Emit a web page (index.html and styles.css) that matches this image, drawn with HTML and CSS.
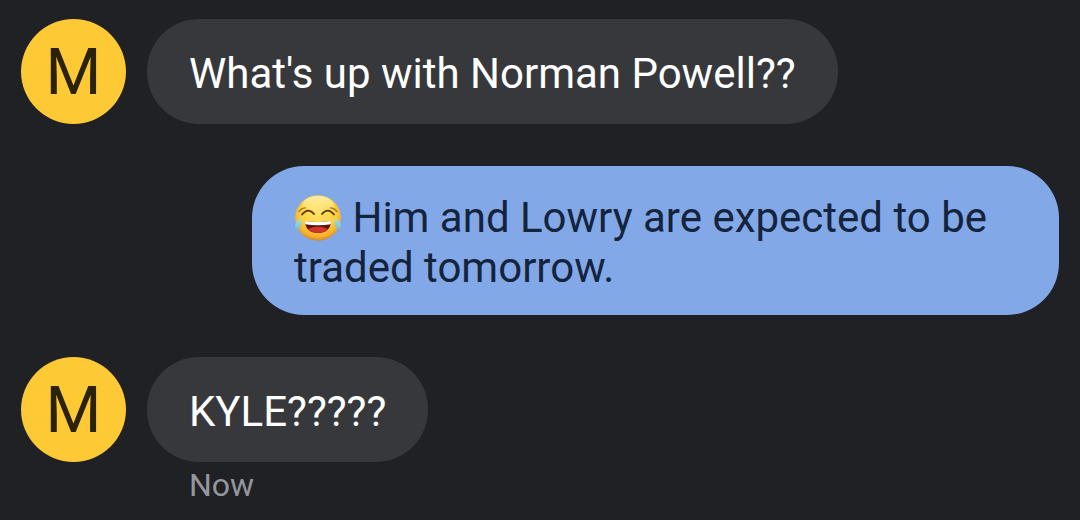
FILE: index.html
```html
<!DOCTYPE html>
<html lang="en">
<head>
    <meta charset="UTF-8">
    <meta name="viewport" content="width=device-width, initial-scale=1">
    <title>Messages</title>
    <link rel="stylesheet" href="styles.css">
</head>
<body>
    <main class="chat">
        <div class="message received">
            <div class="avatar">M</div>
            <div class="content">
                <p class="bubble">What's up with Norman Powell??</p>
            </div>
        </div>

        <div class="message sent">
            <p class="bubble"><svg class="emoji" viewBox="0 0 48 48" role="img" aria-label="Face with tears of joy">
                <defs>
                    <radialGradient id="face" cx="50%" cy="38%" r="62%">
                        <stop offset="0" stop-color="#ffe165"/>
                        <stop offset="0.6" stop-color="#fed23f"/>
                        <stop offset="0.85" stop-color="#f9b02a"/>
                        <stop offset="1" stop-color="#c98a2c"/>
                    </radialGradient>
                    <linearGradient id="shine" x1="0" y1="0" x2="0" y2="1">
                        <stop offset="0" stop-color="#fff9d8" stop-opacity="0.7"/>
                        <stop offset="1" stop-color="#fff3a8" stop-opacity="0"/>
                    </linearGradient>
                    <linearGradient id="tear" x1="0" y1="0" x2="0" y2="1">
                        <stop offset="0" stop-color="#b5e0d0"/>
                        <stop offset="1" stop-color="#6fc0dc"/>
                    </linearGradient>
                    <clipPath id="mouth">
                        <path d="M12 27C20 28.2 28 28.2 36 27Q37.2 27 37 28.5C36.2 35 31.5 39 24 39S11.8 35 11 28.500Q10.800 27 12 27Z"/>
                    </clipPath>
                </defs>
                <circle cx="24" cy="24" r="22.800" fill="url(#face)"/>
                <ellipse cx="24" cy="12" rx="16" ry="10" fill="url(#shine)"/>
                <!-- brows and closed eyes -->
                <path d="M5 17.500Q7.500 14 11.500 13.800M43 17.500Q40.500 14 36.500 13.800" fill="none" stroke="#a97821" stroke-width="1.300" stroke-linecap="round"/>
                <path d="M8 20.500Q14 13 20 20M28 20Q34 13 40 20.500" fill="none" stroke="#5b3f16" stroke-width="1.900" stroke-linecap="round"/>
                <!-- mouth -->
                <g clip-path="url(#mouth)">
                    <rect x="10" y="26" width="28" height="14" fill="#5c160f"/>
                    <ellipse cx="24" cy="36.500" rx="10" ry="3.800" fill="#d0342a"/>
                    <path d="M10 26H38V30Q24 32.500 10 30Z" fill="#fff"/>
                </g>
                <!-- tears -->
                <path d="M7 24C4 25.500 1 28.500 1 32C1.500 36 5.500 36 6.500 32.500C7.300 30 7.500 27 7 24Z" fill="url(#tear)"/>
                <path d="M41 24C44 25.500 47 28.500 47 32C46.500 36 42.500 36 41.500 32.500C40.700 30 40.500 27 41 24Z" fill="url(#tear)"/>
            </svg> Him and Lowry are expected to be traded tomorrow.</p>
        </div>

        <div class="message received">
            <div class="avatar">M</div>
            <div class="content">
                <p class="bubble">KYLE?????</p>
                <span class="time">Now</span>
            </div>
        </div>
    </main>
</body>
</html>
```
FILE: styles.css
```css
* {
    margin: 0;
    padding: 0;
    box-sizing: border-box;
}

body {
    min-height: 100vh;
    background-color: #202125;
    font-family: Roboto, sans-serif;
}

.chat {
    display: flex;
    flex-direction: column;
    gap: 42px;
    padding: 19px 21px;
}

.message {
    display: flex;
    align-items: flex-start;
    gap: 21px;
}

.sent {
    justify-content: flex-end;
    padding-left: 231px;
}

.avatar {
    flex-shrink: 0;
    width: 105px;
    height: 105px;
    border-radius: 50%;
    background-color: #fdc935;
    color: #2b220c;
    font-size: 64px;
    line-height: 107px;
    text-align: center;
}

.content {
    display: flex;
    flex-direction: column;
    align-items: flex-start;
    gap: 4px;
}

.bubble {
    border-radius: 52px;
    font-size: 42px;
    line-height: 50px;
}

.received .bubble {
    padding: 30px 42px 25px;
    background-color: #37383c;
    color: #fff;
}

.sent .bubble {
    padding: 27px 42px 22px;
    background-color: #82a8e7;
    color: #15243d;
}

.emoji {
    display: inline-block;
    width: 48px;
    height: 48px;
    vertical-align: -10px;
}

.time {
    padding-left: 42px;
    color: #94979b;
    font-size: 32px;
    line-height: 38px;
}
```
